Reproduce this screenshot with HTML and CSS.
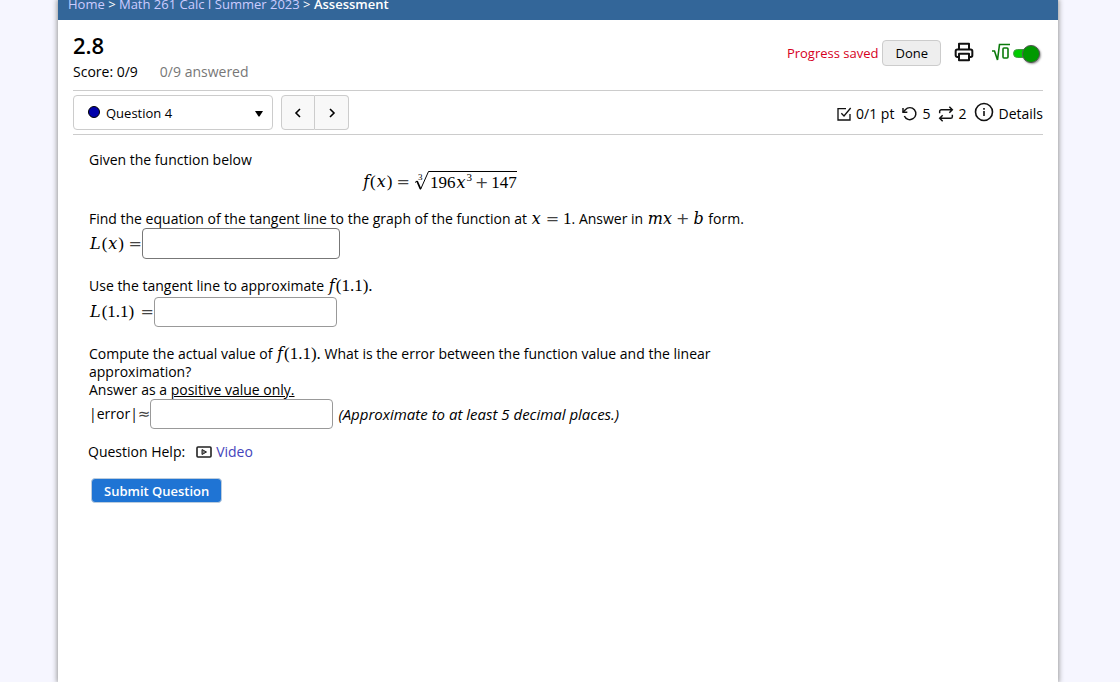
FILE: index.html
```html
<!DOCTYPE html>
<html lang="en">
<head>
<meta charset="utf-8">
<meta name="viewport" content="width=device-width, initial-scale=1">
<title>2.8 - Assessment</title>
<link rel="stylesheet" href="styles.css">
</head>
<body>
<div class="page">
  <nav class="breadcrumb" aria-label="Breadcrumb"><a href="#">Home</a> &gt; <a href="#">Math 261 Calc I Summer 2023</a> &gt; <strong>Assessment</strong></nav>
  <main class="content">
    <header class="header">
      <div class="summary">
        <h1 class="title">2.8</h1>
        <div class="score"><span>Score: 0/9</span><span class="answered">0/9 answered</span></div>
      </div>
      <div class="tools">
        <span class="saved">Progress saved</span>
        <button class="done" type="button">Done</button>
        <button class="icon-button" type="button" aria-label="Print">
          <svg width="20" height="20" viewBox="0 0 24 24" fill="none" stroke="#111" stroke-width="2.4" stroke-linejoin="round"><path d="M6 9V2h12v7M6 18H4a2 2 0 0 1-2-2v-5a2 2 0 0 1 2-2h16a2 2 0 0 1 2 2v5a2 2 0 0 1-2 2h-2"/><path d="M6 14h12v8H6z"/></svg>
        </button>
        <label class="equation-editor" aria-label="Equation editor">
          <svg width="20" height="20" viewBox="0 0 20 20" fill="none" stroke="#0a7a0a" stroke-width="1.600"><path d="M1 8h2.500l3 9L8.500 1.500H19"/><rect x="12" y="5" width="5" height="10" rx="1"/></svg>
          <input class="toggle" type="checkbox" checked>
        </label>
      </div>
    </header>

    <div class="toolbar">
      <div class="picker">
        <svg class="dot" width="14" height="14" viewBox="0 0 14 14"><circle cx="7" cy="7" r="5.500" fill="#00a" stroke="#000"/></svg>
        <select class="picker-select" aria-label="Question"><option>Question 4</option></select>
        <svg class="caret" width="8" height="6" viewBox="0 0 8 6"><path d="M0 0h8L4.500 5.500h-1z"/></svg>
      </div>
      <div class="pager">
        <button type="button" aria-label="Previous question"><svg width="8" height="10" viewBox="0 0 8 10" fill="none" stroke="#000" stroke-width="1.600"><path d="M6 1L2 5l4 4"/></svg></button>
        <button type="button" aria-label="Next question"><svg width="8" height="10" viewBox="0 0 8 10" fill="none" stroke="#000" stroke-width="1.600"><path d="M2 1l4 4-4 4"/></svg></button>
      </div>
      <div class="details">
        <span class="stat"><svg width="16" height="16" viewBox="0 0 24 24" fill="none" stroke="#111" stroke-width="2"><path d="M8 11l4 4L22 3"/><path d="M21 12v9H3V4h12"/></svg>0/1 pt</span>
        <span class="stat"><svg width="16" height="16" viewBox="0 0 24 24" fill="none" stroke="#111" stroke-width="2.200"><path d="M1.500 3v6.500H8"/><path d="M3.500 15a9 9 0 1 0 1.500-9.500L1.500 9.500"/></svg>5</span>
        <span class="stat"><svg width="16" height="16" viewBox="0 0 24 24" fill="none" stroke="#111" stroke-width="2.200"><path d="M17 1l4.500 4.500L17 10M2.500 11V8a2.500 2.500 0 0 1 2.500-2.500H21M7 23l-4.500-4.500L7 14M21.500 13v3a2.500 2.500 0 0 1-2.500 2.500H3"/></svg>2</span>
        <button class="stat details-button" type="button"><svg class="info" width="20" height="20" viewBox="0 0 20 20" fill="none" stroke="#111" stroke-width="1.600"><circle cx="10" cy="10" r="8.500"/><path d="M10 9v5M10 6v1.800"/></svg>Details</button>
      </div>
    </div>

    <form class="question">
      <p class="line">Given the function below</p>
      <div class="formula math"><span class="lhs"><i>f</i>(<i>x</i>)<span class="op">=</span></span><span class="root"><svg width="16" height="22" viewBox="0 0 16 22" fill="none" stroke="#000"><path d="M1 12.500l2-1.500" stroke-width="1"/><path d="M3 11l3.500 8" stroke-width="1.800"/><path d="M6.500 19.500L14.500 1.500H16" stroke-width="1"/></svg><sup class="index">3</sup></span><span class="radicand">196<i>x</i><sup>3</sup><span class="op plus">+</span>147</span></div>
      <p class="line prompt">Find the equation of the tangent line to the graph of the function at <span class="math"><i>x</i><span class="op">=</span>1</span>. Answer in <span class="math"><i>mx</i><span class="op plus">+</span><i>b</i></span> form.</p>
      <div class="answer">
        <label class="answer-label math short" for="tangent"><i>L</i>(<i>x</i>)<span class="op">=</span></label>
        <input class="box wide" id="tangent" type="text">
      </div>
      <p class="line next">Use the tangent line to approximate <span class="math big"><i>f</i>(1.1).</span></p>
      <div class="answer spaced">
        <label class="answer-label math long" for="approx"><i>L</i>(1.1)<span class="op">=</span></label>
        <input class="box" id="approx" type="text">
      </div>
      <p class="line next">Compute the actual value of <span class="math big"><i>f</i>(1.1).</span> What is the error between the function value and the linear approximation?</p>
      <p class="line">Answer as a <u>positive value only.</u></p>
      <div class="answer">
        <label class="answer-label medium" for="error"><span>|error|</span><span class="about">≈</span></label>
        <input class="box" id="error" type="text">
        <em class="hint">(Approximate to at least 5 decimal places.)</em>
      </div>
      <div class="help">Question Help: <a class="video" href="#"><svg width="16" height="12" viewBox="0 0 16 12" fill="none" stroke="#222"><rect x="1" y="1" width="14" height="10" rx="1" stroke-width="1.600"/><path d="M6 3.500v5L10.500 6z" fill="#888"/></svg>Video</a></div>
      <button class="submit" type="submit">Submit Question</button>
    </form>
  </main>
</div>
</body>
</html>
```
FILE: styles.css
```css
* { box-sizing: border-box; }
body {
  display: flex;
  justify-content: center;
  min-height: 100vh;
  margin: 0;
  padding-right: 4px;
  background: #f6f6ff;
  color: #000;
  font: 13px/18px "Open Sans", "Noto Sans", sans-serif;
}
button, input, select { font: inherit; color: inherit; }
button { cursor: pointer; }
svg { flex: none; }
.page {
  display: flex;
  flex-direction: column;
  width: 100%;
  max-width: 1000px;
  overflow: hidden;
  background: #fff;
  box-shadow: 0 0 5px 1px #999;
}
.breadcrumb {
  margin-top: -5px;
  padding: 0 10px 7px;
  background: #336699;
  color: #fff;
}
.breadcrumb a { color: #ccccff; text-decoration: none; }
.breadcrumb strong { font-weight: 600; }
.content { padding: 0 15px; }
.header {
  display: flex;
  justify-content: space-between;
  height: 71px;
  border-bottom: 1px solid #ccc;
}
.summary { padding-top: 13px; }
.title { margin: 0; font-size: 22px; line-height: 24px; font-weight: 600; }
.score { display: flex; gap: 22px; margin-top: 6px; font-size: 14px; }
.answered { color: #777; }
.tools {
  display: flex;
  align-items: center;
  height: 66px;
}
.saved { color: #d6001c; }
.done {
  height: 26px;
  margin-left: 4px;
  padding: 0 12px;
  border: 1px solid #ccc;
  border-radius: 4px;
  background: #eee;
}
.icon-button {
  display: flex;
  margin: 0 17px 0 13px;
  padding: 0 0 2px;
  border: 0;
  background: none;
}
.equation-editor { display: flex; align-items: center; gap: 2px; margin-right: 3px; }
.toggle {
  position: relative;
  width: 27px;
  height: 9px;
  margin: 1px 0 0;
  appearance: none;
  border: 1px solid #494;
  border-radius: 5px;
  background: #00cc00;
}
.toggle::before {
  content: "";
  position: absolute;
  top: -5px;
  right: -1px;
  width: 16px;
  height: 16px;
  border: 1px solid #555;
  border-radius: 50%;
  background: #009900;
  box-shadow: 1px 1px 2px #999;
}
.toolbar {
  display: flex;
  align-items: center;
  height: 44px;
  border-bottom: 1px solid #ccc;
}
.picker {
  position: relative;
  width: 200px;
  height: 35px;
}
.picker-select {
  width: 100%;
  height: 100%;
  padding: 0 28px 0 32px;
  appearance: none;
  border: 1px solid #ccc;
  border-radius: 4px;
  background: #fff;
}
.dot { position: absolute; left: 14px; top: 10px; pointer-events: none; }
.caret { position: absolute; right: 10px; top: 16px; pointer-events: none; }
.pager { display: flex; margin-left: 8px; }
.pager button {
  display: grid;
  place-items: center;
  width: 34px;
  height: 35px;
  padding: 0;
  border: 1px solid #ccc;
  border-radius: 4px 0 0 4px;
  background: #f8f8f8;
}
.pager button + button { border-left: 0; border-radius: 0 4px 4px 0; }
.details { display: flex; align-items: center; gap: 8px; margin-left: auto; padding-top: 3px; font-size: 14px; }
.stat { display: flex; align-items: center; gap: 4px; }
.details-button { padding: 0; border: 0; background: none; }
.info { margin-bottom: 4px; }
.question {
  max-width: 733px;
  padding: 16px 16px 0;
  font-size: 14px;
}
.line { margin: 0; }
.math {
  font-family: "Liberation Serif", serif;
  font-size: 17px;
  line-height: 0;
}
.math i { margin: 0 1px; font-family: "DejaVu Serif", serif; font-size: 16px; }
.math sup { font-size: 11px; line-height: 0; }
.op { margin: 0 4px; font-family: "DejaVu Sans", sans-serif; font-size: 16px; color: #444; }
.plus { margin: 0 3px; }
.formula {
  display: flex;
  justify-content: center;
  height: 22px;
  margin-top: 1px;
}
.lhs { line-height: 24px; }
.root { position: relative; display: flex; }
.math .index { position: absolute; left: 4px; top: 7px; font-size: 9px; }
.radicand { align-self: flex-start; margin-top: 1px; border-top: 1px solid #000; line-height: 22px; }
.prompt { margin-top: 18px; }
.next { margin-top: 18px; }
.answer { display: flex; align-items: center; }
.spaced { margin-top: 2px; }
.answer-label { display: flex; align-items: center; }
.answer-label .op { margin-left: auto; margin-right: 0; }
.short { min-width: 53px; }
.long { min-width: 65px; }
.medium { min-width: 61px; }
.about { margin-left: auto; font: 15px/18px "DejaVu Sans", sans-serif; color: #444; }
.box {
  width: 183px;
  height: 30px;
  padding: 4px;
  border: 1px solid #999;
  border-radius: 4px;
  background: #fff;
}
.wide { width: 198px; height: 31px; border-color: #777; }
.hint { margin-left: 5px; font-size: 15px; }
.help { display: flex; gap: 11px; margin: 14px 0 0 -1px; }
.video { display: flex; align-items: center; gap: 4px; color: #4444bb; text-decoration: none; }
.submit {
  display: block;
  height: 25px;
  margin: 17px 0 0 2px;
  padding: 0 12px;
  border: 1px solid #bcd;
  border-radius: 4px;
  background: #1f74d4;
  color: #fff;
  font-size: 13px;
  font-weight: 600;
}
```
